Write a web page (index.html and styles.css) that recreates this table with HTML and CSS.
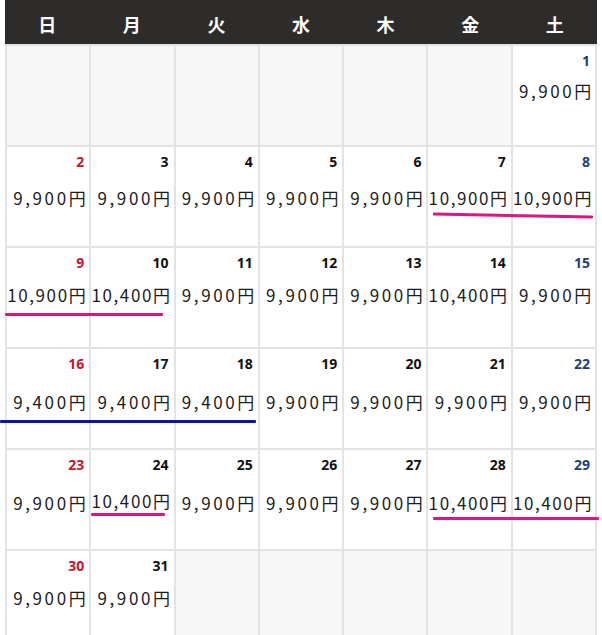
FILE: index.html
```html
<!DOCTYPE html>
<html lang="ja">
<head>
<meta charset="utf-8">
<title>料金カレンダー</title>
<link rel="stylesheet" href="styles.css">
</head>
<body>
<div class="calendar">
  <div class="week-head">
    <div class="wd">日</div><div class="wd">月</div><div class="wd">火</div><div class="wd">水</div><div class="wd">木</div><div class="wd">金</div><div class="wd">土</div>
  </div>
  <div class="days">
    <div class="cell empty"></div>
    <div class="cell empty"></div>
    <div class="cell empty"></div>
    <div class="cell empty"></div>
    <div class="cell empty"></div>
    <div class="cell empty"></div>
    <div class="cell sat"><div class="num">1</div><div class="price hi">9,900円</div></div>

    <div class="cell sun"><div class="num">2</div><div class="price mid">9,900円</div></div>
    <div class="cell"><div class="num">3</div><div class="price mid">9,900円</div></div>
    <div class="cell"><div class="num">4</div><div class="price mid">9,900円</div></div>
    <div class="cell"><div class="num">5</div><div class="price mid">9,900円</div></div>
    <div class="cell"><div class="num">6</div><div class="price mid">9,900円</div></div>
    <div class="cell"><div class="num">7</div><div class="price mid five">10,900円</div></div>
    <div class="cell sat"><div class="num">8</div><div class="price mid five">10,900円</div></div>

    <div class="cell sun"><div class="num">9</div><div class="price five">10,900円</div></div>
    <div class="cell"><div class="num">10</div><div class="price five">10,400円</div></div>
    <div class="cell"><div class="num">11</div><div class="price">9,900円</div></div>
    <div class="cell"><div class="num">12</div><div class="price">9,900円</div></div>
    <div class="cell"><div class="num">13</div><div class="price">9,900円</div></div>
    <div class="cell"><div class="num">14</div><div class="price five">10,400円</div></div>
    <div class="cell sat"><div class="num">15</div><div class="price">9,900円</div></div>

    <div class="cell sun"><div class="num">16</div><div class="price low">9,400円</div></div>
    <div class="cell"><div class="num">17</div><div class="price low">9,400円</div></div>
    <div class="cell"><div class="num">18</div><div class="price low">9,400円</div></div>
    <div class="cell"><div class="num">19</div><div class="price low">9,900円</div></div>
    <div class="cell"><div class="num">20</div><div class="price low">9,900円</div></div>
    <div class="cell"><div class="num">21</div><div class="price low">9,900円</div></div>
    <div class="cell sat"><div class="num">22</div><div class="price low">9,900円</div></div>

    <div class="cell sun"><div class="num">23</div><div class="price low">9,900円</div></div>
    <div class="cell"><div class="num">24</div><div class="price mid five">10,400円</div></div>
    <div class="cell"><div class="num">25</div><div class="price low">9,900円</div></div>
    <div class="cell"><div class="num">26</div><div class="price low">9,900円</div></div>
    <div class="cell"><div class="num">27</div><div class="price low">9,900円</div></div>
    <div class="cell"><div class="num">28</div><div class="price low five">10,400円</div></div>
    <div class="cell sat"><div class="num">29</div><div class="price low five">10,400円</div></div>

    <div class="cell sun"><div class="num">30</div><div class="price">9,900円</div></div>
    <div class="cell"><div class="num">31</div><div class="price">9,900円</div></div>
    <div class="cell empty"></div>
    <div class="cell empty"></div>
    <div class="cell empty"></div>
    <div class="cell empty"></div>
    <div class="cell empty"></div>
  </div>

  <span class="mark pink m1"></span>
  <span class="mark pink m2"></span>
  <span class="mark blue m3"></span>
  <span class="mark pink m4"></span>
  <span class="mark pink m5"></span>
</div>
</body>
</html>
```

FILE: styles.css
```css
html, body {
  margin: 0;
  padding: 0;
  background: #ffffff;
}

.calendar {
  position: relative;
  width: 592px;
  margin-left: 5px;
}

.week-head {
  display: grid;
  grid-template-columns: repeat(7, 1fr);
  height: 44px;
  background: #2e2c2b;
}

.wd {
  display: flex;
  align-items: center;
  justify-content: center;
  color: #ffffff;
  font-family: "Noto Sans CJK JP", sans-serif;
  font-weight: 700;
  font-size: 18px;
  padding-top: 3px;
}

.days {
  display: grid;
  grid-template-columns: repeat(7, 1fr);
  grid-auto-rows: 99px;
  gap: 2px;
  padding: 2px;
  background: #e3e3e3;
}

.cell {
  background: #ffffff;
  min-width: 0;
}

.cell.empty {
  background: #f7f7f7;
}

.num {
  text-align: right;
  padding: 7px 5px 0 0;
  height: 15px;
  line-height: 15px;
  font-family: "Open Sans", "Noto Sans", sans-serif;
  font-weight: 700;
  font-size: 14px;
  color: #111111;
}

.sun .num { color: #c8142c; }
.sat .num { color: #1d3f7a; }

.price {
  margin-top: 13px;
  line-height: 24px;
  text-align: right;
  padding-right: 1px;
  white-space: nowrap;
  font-family: "Noto Sans CJK JP", sans-serif;
  font-weight: 400;
  font-size: 17px;
  letter-spacing: 2.6px;
  color: #1c1c1c;
}

.price.five {
  letter-spacing: 1.6px;
  padding-right: 2px;
}

.price.hi { margin-top: 11px; }
.price.mid { margin-top: 17px; }
.price.low { margin-top: 19px; }

.mark {
  position: absolute;
  height: 3px;
  border-radius: 1px;
}

.pink { background: #e0147e; }
.blue { background: #0c12b0; }

.m1 { left: 428px; top: 214px; width: 160px; transform: rotate(1deg); }
.m2 { left: 0; top: 313px; width: 158px; }
.m3 { left: -5px; top: 420px; width: 256px; }
.m4 { left: 86px; top: 513px; width: 74px; }
.m5 { left: 428px; top: 517px; width: 166px; }
```
